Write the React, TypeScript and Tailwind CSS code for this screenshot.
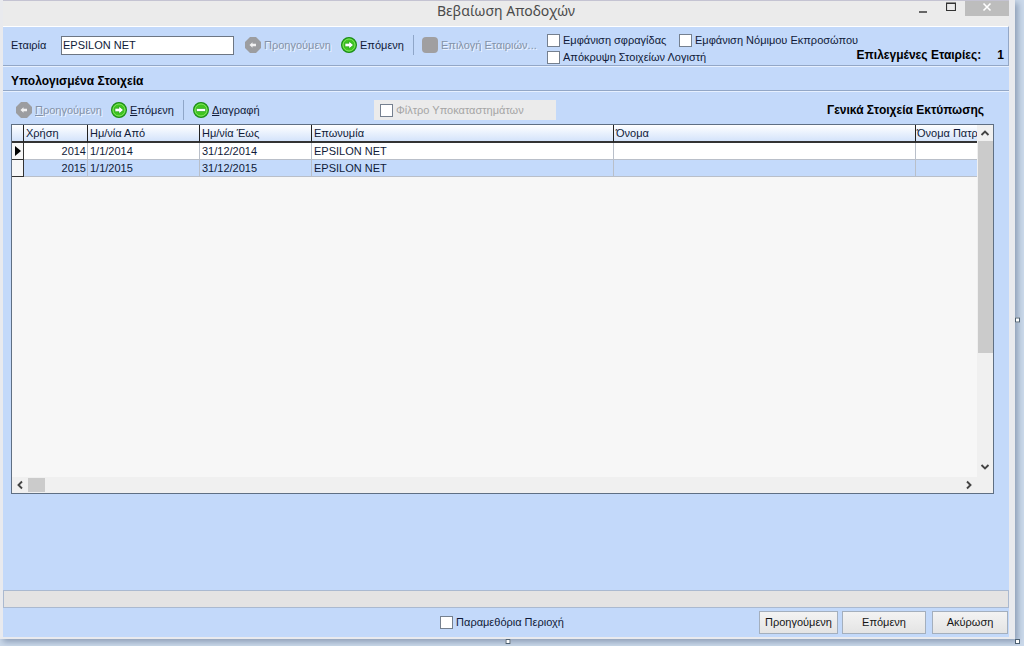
import type { ReactNode } from "react";

type RecordRow = {
  year: string;
  from: string;
  to: string;
  name: string;
};

const records: RecordRow[] = [
  { year: "2014", from: "1/1/2014", to: "31/12/2014", name: "EPSILON NET" },
  { year: "2015", from: "1/1/2015", to: "31/12/2015", name: "EPSILON NET" },
];

const headers = ["Χρήση", "Ημ/νία Από", "Ημ/νία Έως", "Επωνυμία", "Όνομα", "Όνομα Πατρ"];

type IconKind = "prev" | "next" | "remove";

function RoundIcon({ kind }: { kind: IconKind }) {
  if (kind === "prev") {
    return (
      <svg viewBox="0 0 16 16" className="size-4 shrink-0" aria-hidden="true">
        <path d="M5 0h6l5 5v6l-5 5H5l-5-5V5z" fill="#9c9da0" />
        <path d="M4.5 8l3-2.8v1.6H11v2.4H7.500v1.600z" fill="#f2f2f2" />
      </svg>
    );
  }
  return (
    <svg viewBox="0 0 16 16" className="size-4 shrink-0" aria-hidden="true">
      <circle cx="8" cy="8" r="7.400" fill="#3fc51f" stroke="#1c8d18" strokeWidth="1.200" />
      <circle cx="8" cy="8" r="6" fill="none" stroke="#8be868" strokeWidth="0.900" />
      {kind === "next" ? (
        <path d="M4 6.300h4V4.200L12.400 8 8 11.800V9.700H4z" fill="#fff" stroke="#1f9a1a" strokeWidth="0.600" />
      ) : (
        <rect x="3.500" y="6.500" width="9" height="3" rx="0.800" fill="#fff" stroke="#1f9a1a" strokeWidth="0.600" />
      )}
    </svg>
  );
}

type ToolButtonProps = {
  icon: ReactNode;
  disabled?: boolean;
  className: string;
  children: ReactNode;
};

function ToolButton({ icon, disabled, className, children }: ToolButtonProps) {
  return (
    <button
      type="button"
      disabled={disabled}
      className={`flex shrink-0 items-center gap-[3px] whitespace-nowrap text-[#101a38] disabled:text-[#8492a8] disabled:text-shadow-[1px_1px_0_#eef5ff] ${className}`}
    >
      {icon}
      <span>{children}</span>
    </button>
  );
}

function Check({ label, className = "" }: { label: string; className?: string }) {
  return (
    <label className={`flex items-center gap-[3px] whitespace-nowrap ${className}`}>
      <input type="checkbox" className="size-[13px] shrink-0 appearance-none border border-[#75808f] bg-white" />
      {label}
    </label>
  );
}

function Separator() {
  return <div className="h-5 w-px shrink-0 bg-[#8fa6c8]" />;
}

function Chevron({ d }: { d: string }) {
  return (
    <svg viewBox="0 0 10 10" className="size-[10px]" aria-hidden="true">
      <path d={d} fill="none" stroke="#444" strokeWidth="1.900" />
    </svg>
  );
}

function TitleBar() {
  return (
    <header className="relative flex h-[26px] shrink-0 justify-center border-t border-[#c4c3d2] bg-[#ebebeb]">
      <h1 className="font-['Noto_Sans',sans-serif] text-[14px] leading-5 text-[#4a4a4a]">Βεβαίωση Αποδοχών</h1>
      <div className="absolute top-0 right-0 flex h-[15px]">
        <button type="button" aria-label="Ελαχιστοποίηση" className="flex w-7 items-center justify-center">
          <svg viewBox="0 0 10 10" className="size-[10px]">
            <path d="M1 8h8" stroke="#666" strokeWidth="2" />
          </svg>
        </button>
        <button type="button" aria-label="Μεγιστοποίηση" className="flex w-7 items-center justify-center pb-1">
          <svg viewBox="0 0 10 10" className="size-[10px]">
            <path d="M0.500 1h9v7.500h-9zM0 1.500h10" fill="none" stroke="#333" strokeWidth="1.200" />
          </svg>
        </button>
        <button type="button" aria-label="Κλείσιμο" className="flex w-11 items-center justify-center bg-[#bdbdbd] pb-1">
          <svg viewBox="0 0 10 10" className="size-[10px]">
            <path d="M1.500 1.500l7 7M8.500 1.500l-7 7" stroke="#fff" strokeWidth="1.600" />
          </svg>
        </button>
      </div>
    </header>
  );
}

function CompanyBar() {
  return (
    <section className="flex h-10 shrink-0 items-center border-t border-r border-b border-t-white border-r-[#93a7c6] border-b-[#93a7c6] pb-0.5 pl-2 shadow-[0_1px_0_#e6f0ff]">
      <label htmlFor="company" className="w-[50px] shrink-0">
        Εταιρία
      </label>
      <input
        id="company"
        defaultValue="EPSILON NET"
        className="h-[19px] w-[173px] shrink-0 border border-[#6d7683] bg-white px-px text-[11px] text-[#101a38]"
      />
      <ToolButton icon={<RoundIcon kind="prev" />} disabled className="ml-[11px] w-24">
        Προηγούμενη
      </ToolButton>
      <ToolButton icon={<RoundIcon kind="next" />} className="w-[72px]">
        Επόμενη
      </ToolButton>
      <Separator />
      <ToolButton icon={<span className="size-4 shrink-0 rounded-sm bg-[#a09fa0]" />} disabled className="ml-2 w-[125px]">
        Επιλογή Εταιριών...
      </ToolButton>
      <div className="flex min-w-0 flex-1 flex-col gap-0.5 pt-2">
        <div className="flex">
          <Check label="Εμφάνιση σφραγίδας" className="w-[132px] shrink-0" />
          <Check label="Εμφάνιση Νόμιμου Εκπροσώπου" />
        </div>
        <Check label="Απόκρυψη Στοιχείων Λογιστή" />
      </div>
      <p className="flex shrink-0 gap-4 self-end pr-1 text-[12px] font-bold whitespace-nowrap text-black">
        <span>Επιλεγμένες Εταιρίες:</span>
        <span>1</span>
      </p>
    </section>
  );
}

function RecordToolbar() {
  return (
    <div className="flex h-[33px] shrink-0 items-center border-t border-[#e6f0ff] pt-1 pr-[25px] pl-[13px]">
      <ToolButton icon={<RoundIcon kind="prev" />} disabled className="w-[95px]">
        <u>Π</u>ροηγούμενη
      </ToolButton>
      <ToolButton icon={<RoundIcon kind="next" />} className="w-[72px]">
        <u>Ε</u>πόμενη
      </ToolButton>
      <Separator />
      <ToolButton icon={<RoundIcon kind="remove" />} className="ml-[9px] w-[181px]">
        <u>Δ</u>ιαγραφή
      </ToolButton>
      <div className="flex h-5 w-[182px] items-center bg-[#ebebeb] pl-[6px] text-[#a5a5a5]">
        <Check label="Φίλτρο Υποκαταστημάτων" />
      </div>
      <p className="ml-auto text-[12px] font-bold whitespace-nowrap text-black">Γενικά Στοιχεία Εκτύπωσης</p>
    </div>
  );
}

function RecordGrid() {
  return (
    <section className="mr-[15px] mb-24 ml-2 grid min-h-40 flex-1 grid-cols-[minmax(0,1fr)_16px] grid-rows-[minmax(0,1fr)_16px] border border-[#5f6f83] bg-[#f0f0f0]">
      <div className="overflow-hidden bg-[#f7f7f7]">
        <table className="w-full table-fixed border-separate border-spacing-0 whitespace-nowrap">
          <colgroup>
            <col className="w-3" />
            <col className="w-16" />
            <col className="w-28" />
            <col className="w-28" />
            <col className="w-[302px]" />
            <col className="w-[302px]" />
            <col />
          </colgroup>
          <thead>
            <tr className="h-[18px] bg-linear-to-b from-white to-[#cfe0fa] text-left">
              <th className="border-r border-b-2 border-r-[#222] border-b-[#333] p-0" />
              {headers.map((header, i) => (
                <th
                  key={header}
                  className={`border-b-2 border-b-[#333] p-0 font-normal ${i < 5 ? "border-r border-r-[#222] pl-0.5" : "pl-px"}`}
                >
                  {header}
                </th>
              ))}
            </tr>
          </thead>
          <tbody>
            {records.map((record, i) => (
              <tr key={record.year} className="h-[17px] bg-white even:bg-[#c4dafb]">
                <td className="border-r border-b border-[#333] bg-[#f7f7f7] p-0">
                  {i === 0 && (
                    <svg viewBox="0 0 6 10" className="mx-auto h-[10px] w-[6px]" aria-hidden="true">
                      <path d="M0 0l6 5-6 5z" fill="#000" />
                    </svg>
                  )}
                </td>
                <td className="border-r border-b border-[#b9bfc9] p-0 pr-px text-right">{record.year}</td>
                <td className="border-r border-b border-[#b9bfc9] p-0 pl-0.5">{record.from}</td>
                <td className="border-r border-b border-[#b9bfc9] p-0 pl-0.5">{record.to}</td>
                <td className="border-r border-b border-[#b9bfc9] p-0 pl-0.5">{record.name}</td>
                <td className="border-r border-b border-[#b9bfc9] p-0" />
                <td className="border-b border-[#b9bfc9] p-0" />
              </tr>
            ))}
          </tbody>
        </table>
      </div>
      <div className="flex flex-col items-center">
        <div className="flex h-4 shrink-0 items-center">
          <Chevron d="M1.500 7L5 3.500 8.500 7" />
        </div>
        <div className="h-[212px] w-[15px] bg-[#cbcbcb]" />
        <div className="mt-auto flex h-5 shrink-0 items-center">
          <Chevron d="M1.500 3L5 6.500 8.500 3" />
        </div>
      </div>
      <div className="flex items-center">
        <div className="flex w-4 justify-center">
          <Chevron d="M7 1.500L3.500 5 7 8.500" />
        </div>
        <div className="h-[14px] w-[17px] bg-[#cbcbcb]" />
        <div className="ml-auto flex w-4 justify-center">
          <Chevron d="M3 1.500L6.500 5 3 8.500" />
        </div>
      </div>
    </section>
  );
}

function Footer() {
  const button =
    "h-[23px] border border-[#a4afbd] bg-linear-to-b from-[#f3f3f3] to-[#e4e4e4] text-center whitespace-nowrap text-[#151515]";
  return (
    <footer className="grid h-[29px] shrink-0 grid-cols-[1fr_auto_1fr] items-center">
      <div />
      <Check label="Παραμεθόρια Περιοχή" className="mr-2" />
      <div className="flex justify-end pr-px">
        <button type="button" className={`mr-1 w-[79px] ${button}`}>
          Προηγούμενη
        </button>
        <button type="button" className={`mr-[6px] w-[84px] ${button}`}>
          Επόμενη
        </button>
        <button type="button" className={`w-[76px] ${button}`}>
          Ακύρωση
        </button>
      </div>
    </footer>
  );
}

export default function App() {
  const handle = "absolute size-[5px] border border-[#4c5f70] bg-white";
  return (
    <div className="flex min-h-screen flex-col bg-[#cbd9ea] pr-[9px] pb-[7px] font-['Liberation_Sans',Arial,sans-serif] text-[11px] leading-[15px] text-[#101a38]">
      <main className="relative flex flex-1 flex-col bg-[#e9eaee] pr-[6px] pb-0.5 pl-[3px] shadow-[3px_3px_6px_#8e9fb8]">
        <TitleBar />
        <div className="flex flex-1 flex-col bg-[#c3d9fa]">
          <CompanyBar />
          <h2 className="h-[25px] shrink-0 border-b border-[#93a7c6] pt-2 pl-2 text-[12px] font-bold text-black">
            Υπολογισμένα Στοιχεία
          </h2>
          <RecordToolbar />
          <RecordGrid />
          <div className="h-[18px] shrink-0 border border-[#aab9d0] bg-[#e4e3e3]" />
          <Footer />
        </div>
        <div className={`top-1/2 -right-[5px] -translate-y-1/2 ${handle}`} />
        <div className={`-bottom-[5px] left-1/2 -translate-x-1/2 ${handle}`} />
        <div className={`-right-[5px] -bottom-[5px] ${handle}`} />
      </main>
    </div>
  );
}
